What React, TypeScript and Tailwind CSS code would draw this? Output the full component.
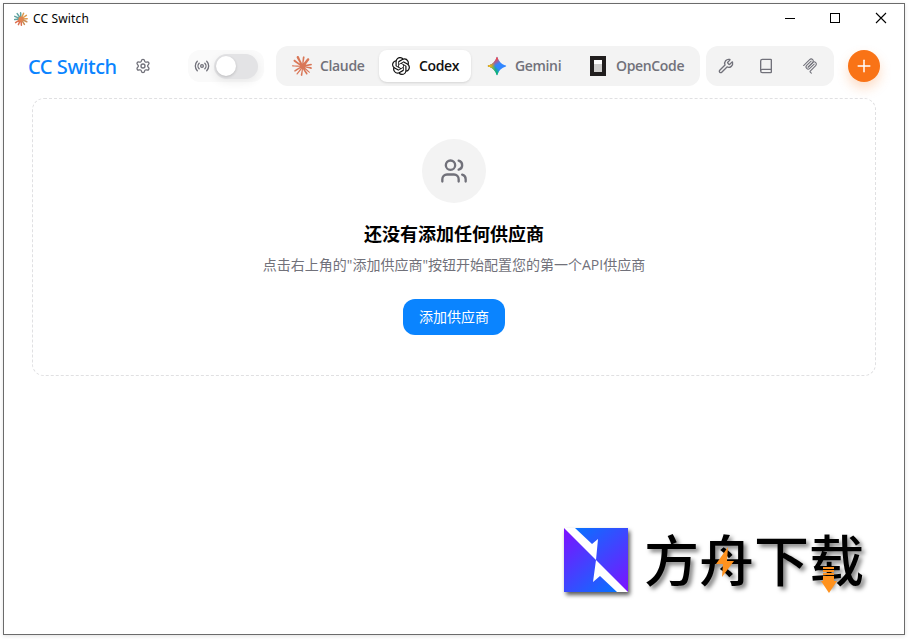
import React, { useState } from 'react';
import { Book, Plus, Radio, Settings, Users, Wrench } from 'lucide-react';
import { SiClaude, SiOpenai } from 'react-icons/si';
import clsx from 'clsx';

type AppId = 'claude' | 'codex' | 'gemini' | 'opencode';

const GeminiIcon = () => (
  <svg viewBox="0 0 24 24" className="h-5 w-5">
    <defs>
      <linearGradient id="gem-green" x1="7" y1="15.5" x2="11" y2="12" gradientUnits="userSpaceOnUse">
        <stop stopColor="#08B962" />
        <stop offset="1" stopColor="#08B962" stopOpacity="0" />
      </linearGradient>
      <linearGradient id="gem-red" x1="8" y1="5.5" x2="11.5" y2="11" gradientUnits="userSpaceOnUse">
        <stop stopColor="#F94543" />
        <stop offset="1" stopColor="#F94543" stopOpacity="0" />
      </linearGradient>
      <linearGradient id="gem-yellow" x1="3.5" y1="13.5" x2="17.5" y2="12" gradientUnits="userSpaceOnUse">
        <stop stopColor="#FABC12" />
        <stop offset=".46" stopColor="#FABC12" stopOpacity="0" />
      </linearGradient>
    </defs>
    {['#3186FF', 'url(#gem-green)', 'url(#gem-red)', 'url(#gem-yellow)'].map((fill) => (
      <path
        key={fill}
        fill={fill}
        d="M20.616 10.835a14.147 14.147 0 01-4.45-3.001 14.111 14.111 0 01-3.678-6.452.503.503 0 00-.975 0 14.134 14.134 0 01-3.679 6.452 14.155 14.155 0 01-4.45 3.001c-.65.28-1.318.505-2.002.678a.502.502 0 000 .975c.684.172 1.35.397 2.002.677a14.147 14.147 0 014.45 3.001 14.112 14.112 0 013.679 6.453.502.502 0 00.975 0c.172-.685.397-1.351.677-2.003a14.145 14.145 0 013.001-4.45 14.113 14.113 0 016.453-3.678.503.503 0 000-.975 13.245 13.245 0 01-2.003-.678z"
      />
    ))}
  </svg>
);

const OpenCodeIcon = () => (
  <svg viewBox="0 0 20 20" className="h-5 w-5" shapeRendering="crispEdges">
    <path d="M2 0h16v20H2z" fill="#211e1e" />
    <path d="M6 4h8v4H6z" fill="#fff" />
    <path d="M6 8h8v8H6z" fill="#cfcecd" />
  </svg>
);

const McpIcon = () => (
  <svg viewBox="0 0 180 180" className="h-4 w-4" fill="none" stroke="currentColor" strokeWidth="12" strokeLinecap="round">
    <path d="M18 84.853l67.882-67.882c9.373-9.373 24.569-9.373 33.941 0 9.373 9.372 9.373 24.568 0 33.941l-51.265 51.265" />
    <path d="M69.265 101.47l50.558-50.558c9.373-9.373 24.569-9.373 33.942 0l.353.353c9.373 9.373 9.373 24.569 0 33.941L92.725 146.6c-3.124 3.124-3.124 8.189 0 11.313l12.606 12.607" />
    <path d="M102.853 33.941L52.648 84.146c-9.372 9.372-9.372 24.568 0 33.941 9.373 9.372 24.569 9.372 33.941 0l50.205-50.205" />
  </svg>
);

const WindowLogo = () => (
  <svg viewBox="0 0 14 14" className="h-3.5 w-3.5" strokeWidth="1.5" strokeLinecap="round">
    <path d="M7 7 3.2 1.6M7 7 .8 4.4M7 7 .6 7.6M7 7 6.6.8" stroke="#5fa3a0" />
    <path d="M7 7 9.6 1.2M7 7 12.4 3.4M7 7 13.2 6.8" stroke="#dd9a4f" />
    <path d="M7 7 1.6 10.6M7 7 4.4 12.6M7 7 7.4 13.2" stroke="#dc7050" />
    <path d="M7 7 10.4 12.4M7 7 12.8 9.8" stroke="#c98c54" />
    <circle cx="7" cy="7" r="2.6" fill="#e0834f" />
  </svg>
);

const apps: { id: AppId; label: string; icon: React.ReactNode; width: string }[] = [
  { id: 'claude', label: 'Claude', icon: <SiClaude className="h-5 w-5 text-[#d97757]" />, width: 'w-[43px]' },
  { id: 'codex', label: 'Codex', icon: <SiOpenai className="mx-px h-[18px] w-[18px]" />, width: 'w-10' },
  { id: 'gemini', label: 'Gemini', icon: <GeminiIcon />, width: 'w-[45px]' },
  { id: 'opencode', label: 'OpenCode', icon: <OpenCodeIcon />, width: 'w-[68px]' },
];

function TitleBar() {
  return (
    <div className="flex h-[30px] items-center pl-[10px] font-['Noto_Sans','Open_Sans',sans-serif]">
      <WindowLogo />
      <span className="ml-[5px] text-[12px] leading-4 tracking-[0.15px] text-black">CC Switch</span>
      <svg viewBox="0 0 120 14" className="ml-auto mr-[10px] h-[14px] w-[120px]" fill="none" stroke="#000">
        <path d="M11 6.5h10M56.5 1.5h9v9h-9z" shapeRendering="crispEdges" />
        <path d="M102 1l10 10M112 1l-10 10" strokeWidth="1.1" />
      </svg>
    </div>
  );
}

function Header({ active, onSelect }: { active: AppId; onSelect: (id: AppId) => void }) {
  const [proxy, setProxy] = useState(false);

  return (
    <header className="mt-3 flex h-10 items-center pl-6 pr-6 text-[#71717a]">
      <h1 className="w-[89px] whitespace-nowrap pt-px font-['Noto_Sans','Open_Sans',sans-serif] text-[20px] font-medium leading-7 tracking-[-0.45px] text-[#0a84ff]">
        CC Switch
      </h1>
      <button className="ml-[18px]">
        <Settings className="h-4 w-4" />
      </button>

      <div className="ml-[37px] flex h-8 w-[76px] items-center gap-1 rounded-xl bg-[#fafafa] pl-1.5">
        <Radio className="h-4 w-4" />
        <button
          onClick={() => setProxy(!proxy)}
          className={clsx(
            'flex h-[25px] w-11 items-center rounded-full px-0.5 shadow-[0_3px_10px_rgba(0,0,0,0.07)]',
            proxy ? 'justify-end bg-[#0a84ff]' : 'bg-[#e3e3e5]',
          )}
        >
          <span className="h-5 w-5 rounded-full bg-white shadow-[0_1px_3px_rgba(0,0,0,0.18)]" />
        </button>
      </div>

      <nav className="ml-3 flex h-10 w-[424px] items-center gap-1 rounded-xl bg-[#f3f3f3] px-1">
        {apps.map((app) => (
          <button
            key={app.id}
            onClick={() => onSelect(app.id)}
            className={clsx(
              'flex h-8 items-center gap-2 whitespace-nowrap rounded-lg px-3 text-[14px] font-semibold tracking-[-0.35px]',
              app.id === active ? 'bg-white text-[#111] shadow-sm' : 'text-[#71717a]',
            )}
          >
            {app.icon}
            <span className={clsx('pb-0.5 text-left', app.width)}>{app.label}</span>
          </button>
        ))}
      </nav>

      <div className="ml-1.5 flex h-10 w-32 items-center rounded-xl bg-[#f3f3f3] px-3">
        <Wrench className="h-4 w-4" />
        <Book className="ml-6 h-4 w-4" />
        <span className="ml-7">
          <McpIcon />
        </span>
      </div>

      <button className="ml-[14px] flex h-8 w-8 items-center justify-center rounded-full bg-[#f97316] text-white shadow-[0_6px_12px_rgba(249,115,22,0.25)]">
        <Plus className="h-5 w-5" strokeWidth={1.8} />
      </button>
    </header>
  );
}

function EmptyState() {
  return (
    <section className="mx-7 mt-3 flex h-[278px] flex-col items-center rounded-xl border border-dashed border-[#e0e0e2] pt-10">
      <div className="flex h-16 w-16 items-center justify-center rounded-full bg-[#f3f3f3]">
        <Users className="h-7 w-7 text-[#71717a]" />
      </div>
      <h3 className="mt-[17px] text-[18px] font-bold leading-7 text-black">还没有添加任何供应商</h3>
      <p className="mt-[7px] text-[14px] leading-5 text-[#71717a]">
        点击右上角的"添加供应商"按钮开始配置您的第一个API供应商
      </p>
      <button className="mt-6 h-9 rounded-xl bg-[#0a84ff] px-4 pb-0.5 text-[14px] text-white">添加供应商</button>
    </section>
  );
}

function Watermark() {
  return (
    <div className="absolute left-[560px] top-[524px] flex items-start">
      <svg viewBox="0 0 64 64" className="h-16 w-16 drop-shadow-[2px_3px_2px_rgba(0,0,0,0.65)]">
        <defs>
          <linearGradient id="wm-top" x1="12" y1="0" x2="64" y2="60" gradientUnits="userSpaceOnUse">
            <stop stopColor="#0872ff" />
            <stop offset="1" stopColor="#7a14ff" />
          </linearGradient>
          <linearGradient id="wm-bottom" x1="0" y1="5" x2="52" y2="64" gradientUnits="userSpaceOnUse">
            <stop stopColor="#7a14ff" />
            <stop offset="1" stopColor="#0872ff" />
          </linearGradient>
        </defs>
        <path d="M0 0h64v64H0z" fill="#fff" />
        <path d="M11 0h53v64L32 32l2-21-6 5z" fill="url(#wm-top)" />
        <path d="M0 0l32 32-3 22 7-6 17 16H0z" fill="url(#wm-bottom)" />
      </svg>
      <div className="relative ml-4 -mt-px whitespace-nowrap font-['Noto_Sans_CJK_SC',sans-serif] text-[55px] font-medium leading-[60px] text-black [text-shadow:3px_3px_4px_rgba(0,0,0,0.5)]">
        方舟下载
        <svg viewBox="0 0 220 70" className="absolute left-0 top-0 h-[70px] w-[220px]" fill="#ff921e">
          <path d="M84 20 72 37h7l-1 13 12-16h-7z" />
          <path d="M179 40h11v2h-11zM179 43h11v2h-11zM179 46h11v2h-11zM179 49h11v5h3l-8 12-8-12h2z" />
        </svg>
      </div>
    </div>
  );
}

export default function App() {
  const [active, setActive] = useState<AppId>('codex');

  return (
    <div className="h-[639px] w-[909px] overflow-hidden bg-white p-[3px] font-['Open_Sans','Noto_Sans_CJK_SC',sans-serif]">
      <div className="relative h-[632px] w-[902px] border border-[#6b6b6b] bg-white shadow-[0_1px_4px_rgba(0,0,0,0.12)]">
        <TitleBar />
        <Header active={active} onSelect={setActive} />
        <EmptyState />
        <Watermark />
      </div>
    </div>
  );
}
